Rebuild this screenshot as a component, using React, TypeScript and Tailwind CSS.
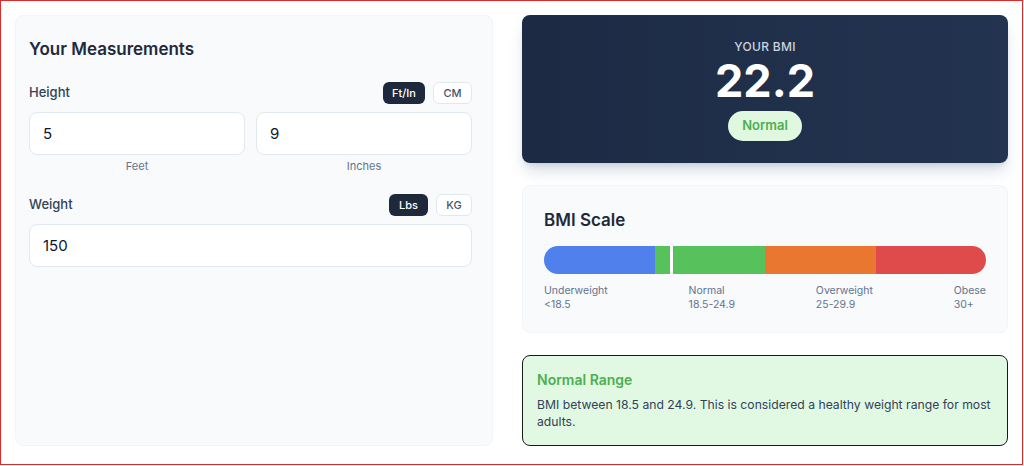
import { useState } from "react";

const segments = [
  { label: "Underweight", range: "<18.5", color: "bg-[#4f80eb]" },
  { label: "Normal", range: "18.5-24.9", color: "bg-[#57c15b]" },
  { label: "Overweight", range: "25-29.9", color: "bg-[#e9772f]" },
  { label: "Obese", range: "30+", color: "bg-[#df4b4b]" },
];

export default function App() {
  const [heightUnit, setHeightUnit] = useState<"ftin" | "cm">("ftin");
  const [weightUnit, setWeightUnit] = useState<"lbs" | "kg">("lbs");
  const [feet, setFeet] = useState("5");
  const [inches, setInches] = useState("9");
  const [weight, setWeight] = useState("150");

  const meters = (Number(feet) * 12 + Number(inches)) * 0.0254;
  const kg = Number(weight) * 0.453592;
  const bmi = meters > 0 ? kg / (meters * meters) : 0;
  const markerPct = Math.min(100, Math.max(0, ((bmi - 15) / 25) * 100));

  return (
    <div
      className="box-border h-[465px] w-[1023px] border border-[#dd2a2a] bg-white px-[14px] pt-[14px] pb-[18px] text-slate-800"
      style={{ fontFamily: "Inter, 'Noto Sans', sans-serif" }}
    >
      <div className="flex h-full gap-[29px]">
        {/* left */}
        <div className="flex w-[478px] flex-col rounded-lg border border-slate-100 bg-[#f8fafc] pt-[19px] pr-[20px] pl-[13px]">
          <h2 className="text-[17px] leading-7 font-semibold text-[#1e293b]">Your Measurements</h2>

          <div className="mt-[19px] flex h-[22px] items-center justify-between">
            <span className="text-[13px] font-medium text-slate-700">Height</span>
            <div className="flex gap-2">
              <UnitButton active={heightUnit === "ftin"} onClick={() => setHeightUnit("ftin")} w="w-[42px]">
                Ft/In
              </UnitButton>
              <UnitButton active={heightUnit === "cm"} onClick={() => setHeightUnit("cm")} w="w-[39px]">
                CM
              </UnitButton>
            </div>
          </div>
          <div className="mt-2 grid grid-cols-2 gap-[11px]">
            <div className="flex flex-col">
              <NumInput value={feet} onChange={setFeet} />
              <span className="mt-[3px] text-center text-[11px] leading-4 text-slate-500">Feet</span>
            </div>
            <div className="flex flex-col">
              <NumInput value={inches} onChange={setInches} />
              <span className="mt-[3px] text-center text-[11px] leading-4 text-slate-500">Inches</span>
            </div>
          </div>

          <div className="mt-[20px] flex h-[22px] items-center justify-between">
            <span className="text-[13px] font-medium text-slate-700">Weight</span>
            <div className="flex gap-2">
              <UnitButton active={weightUnit === "lbs"} onClick={() => setWeightUnit("lbs")} w="w-[39px]">
                Lbs
              </UnitButton>
              <UnitButton active={weightUnit === "kg"} onClick={() => setWeightUnit("kg")} w="w-[36px]">
                KG
              </UnitButton>
            </div>
          </div>
          <div className="mt-[8px]">
            <NumInput value={weight} onChange={setWeight} />
          </div>
        </div>

        {/* right */}
        <div className="flex w-[486px] flex-col gap-[22px]">
          <div className="flex h-[148px] flex-col items-center rounded-lg bg-gradient-to-r from-[#1d2a44] to-[#233450] pt-[24px] shadow-lg shadow-slate-400/40">
            <span className="text-[12px] leading-4 font-medium tracking-wide text-slate-300">YOUR BMI</span>
            <span className="mt-[2px] text-[45px] leading-[48px] font-bold text-white">
              {(Math.round(bmi * 10) / 10).toFixed(1)}
            </span>
            <span className="mt-[6px] flex h-[30px] items-center rounded-full bg-[#dff8df] px-[14px] text-[13px] font-semibold text-[#4caf50]">
              Normal
            </span>
          </div>

          <div className="rounded-lg border border-slate-100 bg-[#f8fafc] px-[21px] pt-[20px] pb-[20px]">
            <h3 className="text-[17px] leading-7 font-semibold text-[#1e293b]">BMI Scale</h3>
            <div className="relative mt-[12px] flex h-7 overflow-hidden rounded-full">
              {segments.map((s) => (
                <div key={s.label} className={`flex-1 ${s.color}`} />
              ))}
              <div className="absolute top-0 h-full w-[3px] bg-white" style={{ left: `${markerPct}%` }} />
            </div>
            <div className="mt-[10px] flex justify-between text-[10.5px] leading-[14px] text-slate-500">
              {segments.map((s) => (
                <div key={s.label} className="flex flex-col">
                  <span>{s.label}</span>
                  <span>{s.range}</span>
                </div>
              ))}
            </div>
          </div>

          <div className="flex-1 rounded-lg border-[1.5px] border-[#1a1a1a] bg-[#e1f9e3] pt-[14px] pr-[10px] pl-[14px]">
            <h4 className="text-[14px] leading-5 font-semibold text-[#4caf50]">Normal Range</h4>
            <p className="mt-[6px] text-[12.2px] leading-[17px] text-slate-700">
              BMI between 18.5 and 24.9. This is considered a healthy weight range for most adults.
            </p>
          </div>
        </div>
      </div>
    </div>
  );
}

function UnitButton({
  active,
  onClick,
  w,
  children,
}: {
  active: boolean;
  onClick: () => void;
  w: string;
  children: React.ReactNode;
}) {
  return (
    <button
      type="button"
      onClick={onClick}
      className={`${w} h-[22px] rounded-md text-[11px] font-medium ${
        active ? "bg-[#1e293b] text-white" : "border border-slate-200 bg-white text-slate-600"
      }`}
    >
      {children}
    </button>
  );
}

function NumInput({ value, onChange }: { value: string; onChange: (v: string) => void }) {
  return (
    <input
      type="text"
      value={value}
      onChange={(e) => onChange(e.target.value)}
      className="h-[43px] w-full rounded-lg border border-slate-200 bg-white px-[13px] text-[15px] text-slate-900 outline-none"
    />
  );
}
